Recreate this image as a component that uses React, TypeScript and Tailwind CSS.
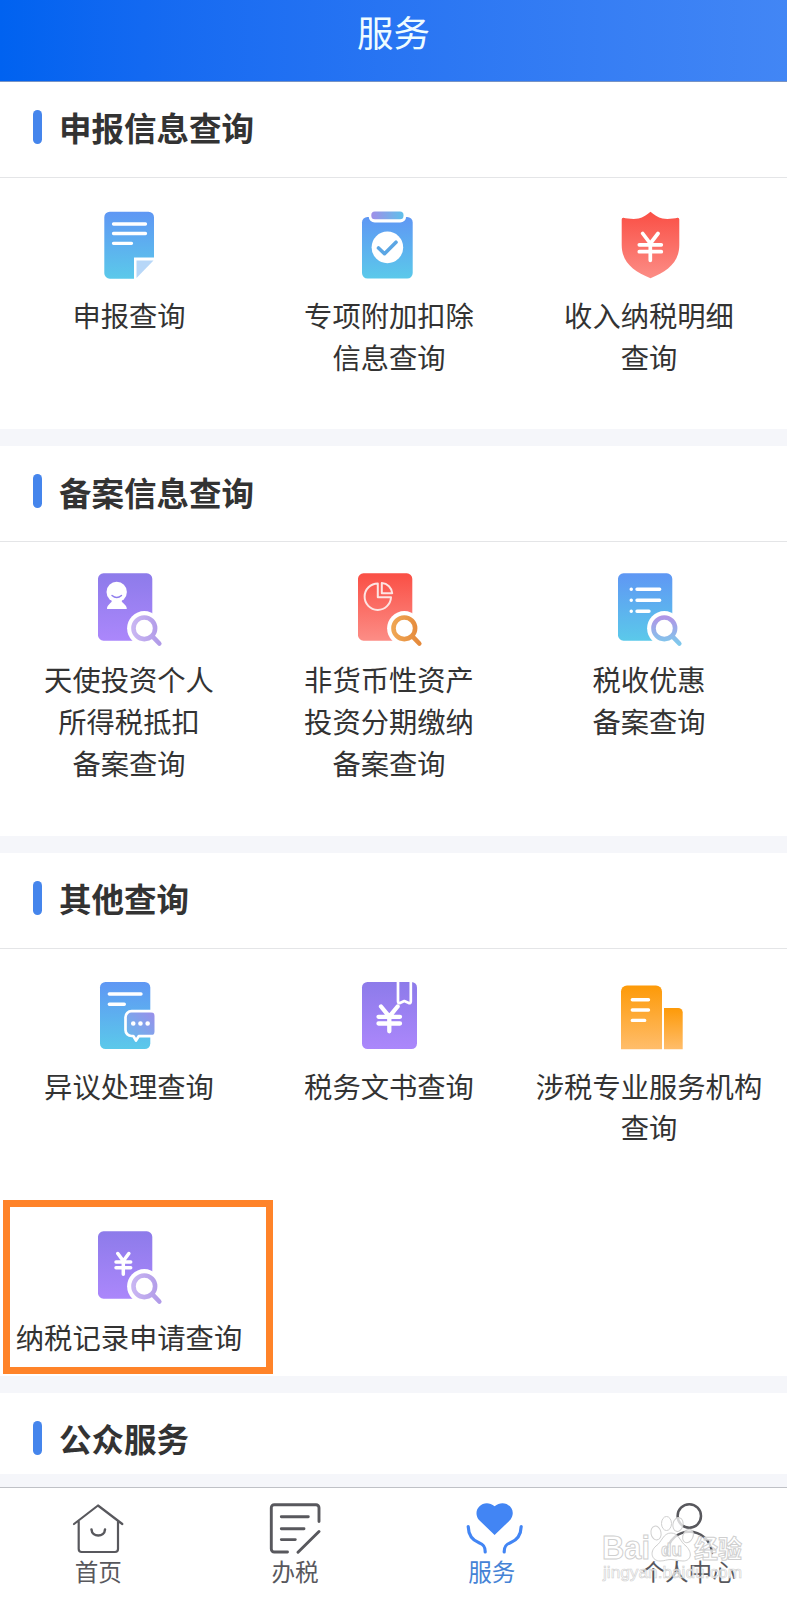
import type { ReactNode } from "react";

const BLUE = "url(#blue)";
const PURPLE = "url(#purple)";
const RED = "url(#red)";
const ORANGE = "url(#orange)";

interface ServiceItem {
  icon: ReactNode;
  lines: string[];
  highlighted?: boolean;
}

interface ServiceSection {
  title: string;
  items: ServiceItem[];
}

function Gradients() {
  return (
    <svg className="absolute h-0 w-0" aria-hidden="true">
      <defs>
        <linearGradient id="blue" x1="0" y1="0" x2="0" y2="1">
          <stop offset="0" stopColor="#5f97f4" />
          <stop offset="1" stopColor="#5bc9ea" />
        </linearGradient>
        <linearGradient id="purple" x1="0" y1="0" x2="0" y2="1">
          <stop offset="0" stopColor="#8d7bea" />
          <stop offset="1" stopColor="#ab87fb" />
        </linearGradient>
        <linearGradient id="red" x1="0" y1="0" x2="0" y2="1">
          <stop offset="0" stopColor="#fa4f45" />
          <stop offset="1" stopColor="#fc8d86" />
        </linearGradient>
        <linearGradient id="orange" x1="0" y1="0" x2="0" y2="1">
          <stop offset="0" stopColor="#fd9a08" />
          <stop offset="1" stopColor="#ffbd6b" />
        </linearGradient>
        <linearGradient id="clip" x1="0" y1="0" x2="1" y2="0">
          <stop offset="0" stopColor="#a08fe8" />
          <stop offset="1" stopColor="#5fc0ea" />
        </linearGradient>
        <linearGradient id="bubble" x1="1" y1="0" x2="0" y2="1">
          <stop offset="0" stopColor="#9a8eea" />
          <stop offset="1" stopColor="#62bcec" />
        </linearGradient>
        <linearGradient id="lensLilac" x1="0" y1="0" x2="1" y2="0">
          <stop offset="0" stopColor="#c8b5f2" />
          <stop offset="1" stopColor="#b19be8" />
        </linearGradient>
        <linearGradient id="lensOrange" x1="0" y1="0" x2="1" y2="0">
          <stop offset="0" stopColor="#efa552" />
          <stop offset="1" stopColor="#e58a3c" />
        </linearGradient>
        <linearGradient id="lensBlue" x1="0" y1="0" x2="0" y2="1">
          <stop offset="0" stopColor="#b096e6" />
          <stop offset="1" stopColor="#7fc8ec" />
        </linearGradient>
      </defs>
    </svg>
  );
}

function Icon({ children }: { children: ReactNode }) {
  return (
    <svg viewBox="0 0 84 84" className="h-[84px] w-[84px]" fill="none" strokeLinecap="round" strokeLinejoin="round">
      {children}
    </svg>
  );
}

function SearchDoc({ fill, lens, children }: { fill: string; lens: string; children: ReactNode }) {
  return (
    <Icon>
      <rect x="11" y="7.3" width="54.3" height="67.4" rx="5.5" fill={fill} />
      {children}
      <circle cx="57.3" cy="62.3" r="17.2" fill="#fff" />
      <path
        d="M57.3 51.500a10.800 10.800 0 1 0 0 21.600a10.800 10.800 0 1 0 0-21.600M65.200 70.200L72.300 77.500"
        stroke={lens}
        strokeWidth="4.600"
      />
    </Icon>
  );
}

const declareIcon = (
  <Icon>
    <path d="M22.800 9.700H61.500a5.500 5.500 0 0 1 5.500 5.500V55.600H47V76.700H22.800a5.500 5.500 0 0 1-5.500-5.500V15.200a5.500 5.500 0 0 1 5.500-5.500Z" fill={BLUE} />
    <path d="M26.500 22H58.500M26.500 31.500H58.500M26.500 41.300H44.500" stroke="#fff" strokeWidth="3.300" />
    <path d="M49.500 58.500H66.500L49.500 76Z" fill="#b7d7f8" />
  </Icon>
);

const deductionIcon = (
  <Icon>
    <rect x="15" y="15" width="50.700" height="61.500" rx="5.500" fill={BLUE} />
    <rect x="21.700" y="6.700" width="37.500" height="13.800" rx="6" fill="#fff" />
    <rect x="24.300" y="9.600" width="32.200" height="7.600" rx="3.500" fill="url(#clip)" />
    <circle cx="40.400" cy="45.400" r="15.800" fill="#fff" />
    <path d="M31.500 46L37.500 51.700L49 40.200" stroke="#5ba6e4" strokeWidth="3.600" />
  </Icon>
);

const shieldIcon = (
  <Icon>
    <path
      d="M43.500 9.700C46.500 12.500 51 15.500 55.500 16.500C60.500 17.500 67 16.500 70.500 15.800Q72.300 15.600 72.300 17.500V43C72.300 60 60.500 69.500 43.500 76.200C26.500 69.500 14.700 60 14.700 43V17.500Q14.700 15.600 16.500 15.800C20 16.500 26.500 17.500 31.500 16.500C36 15.500 40.500 12.500 43.500 9.700Z"
      fill={RED}
    />
    <path d="M35.700 31.500L43.300 41.500L51 31.500M43.300 41.500V58.300M32.300 42.800H54.300M32.300 49.700H54.300" stroke="#fff" strokeWidth="3.700" />
  </Icon>
);

const angelIcon = (
  <SearchDoc fill={PURPLE} lens="url(#lensLilac)">
    <circle cx="29.700" cy="26" r="10.200" fill="#fff" />
    <path d="M25 34H34.500C34.500 37.500 39.800 38 39.800 43H20C20 38 25 37.500 25 34Z" fill="#fff" />
    <path d="M25 29.500Q29.700 33.500 34.500 29.500" stroke="#8f7ded" strokeWidth="1.400" />
  </SearchDoc>
);

const assetIcon = (
  <SearchDoc fill={RED} lens="url(#lensOrange)">
    <path d="M30.800 17.500A13.200 13.200 0 1 0 44 31.300H30.800Z" stroke="#fde4e2" strokeWidth="2" />
    <path d="M34.800 17V27.300H45.200A11 11 0 0 0 34.800 17Z" stroke="#fde4e2" strokeWidth="2" />
  </SearchDoc>
);

const benefitIcon = (
  <SearchDoc fill={BLUE} lens="url(#lensBlue)">
    <path
      d="M24.200 23.300H24.300M30 23.300H52.700M24.200 34.300H24.300M30 34.300H52.700M24.200 45.200H24.300M30 45.200H42"
      stroke="#fff"
      strokeWidth="3.400"
    />
  </SearchDoc>
);

const objectionIcon = (
  <Icon>
    <rect x="13" y="9" width="50.300" height="67" rx="5.500" fill={BLUE} />
    <path d="M22.300 21H54M22.300 31.200H37.300" stroke="#fff" strokeWidth="3.400" />
    <path
      d="M44 39H63.500a4 4 0 0 1 4 4V58.500a4 4 0 0 1-4 4H52.500L49 68.500L45.500 62.500H44a5 5 0 0 1-5-5V44a5 5 0 0 1 5-5Z"
      fill="url(#bubble)"
    />
    <path d="M66 38.200H44.500a6 6 0 0 0-6 6V57a6 6 0 0 0 6 6H46.300L49 67.500L51.700 63.200H66" stroke="#fff" strokeWidth="2.700" />
    <path d="M46.200 50.500H46.300M53.400 50.500H53.500M60.600 50.500H60.700" stroke="#fff" strokeWidth="4.500" />
  </Icon>
);

const documentIcon = (
  <Icon>
    <rect x="15" y="9" width="55" height="67" rx="5.500" fill={PURPLE} />
    <path d="M51 9V28.500Q51 31 53.500 29.700L57.300 28L61.300 29.700Q63.800 31 63.800 28.500V9" stroke="#fff" strokeWidth="2.700" strokeLinecap="butt" />
    <path d="M34 33.500L42.300 43.700L50.600 33.500M42.300 43.700V58.300M31.500 43.800H53M31.500 50.500H53" stroke="#fff" strokeWidth="4.300" />
  </Icon>
);

const agencyIcon = (
  <Icon>
    <path d="M14 76.300V18.500a6 6 0 0 1 6-6H49a6 6 0 0 1 6 6V76.300Z" fill={ORANGE} />
    <path d="M57 76.300V35H71.200a4.500 4.500 0 0 1 4.500 4.500V76.300Z" fill={ORANGE} />
    <path d="M25.300 26.700H41.500M25.300 37H41.500M25.300 47.400H37.700" stroke="#fff" strokeWidth="3.400" />
  </Icon>
);

const taxRecordIcon = (
  <SearchDoc fill={PURPLE} lens="url(#lensLilac)">
    <path d="M30.800 29.500L36.300 37L41.800 29.500M36.300 37V50.300M29 38H43.700M29 43.700H43.700" stroke="#fff" strokeWidth="3.500" />
  </SearchDoc>
);

const sections: ServiceSection[] = [
  {
    title: "申报信息查询",
    items: [
      { icon: declareIcon, lines: ["申报查询"] },
      { icon: deductionIcon, lines: ["专项附加扣除", "信息查询"] },
      { icon: shieldIcon, lines: ["收入纳税明细", "查询"] },
    ],
  },
  {
    title: "备案信息查询",
    items: [
      { icon: angelIcon, lines: ["天使投资个人", "所得税抵扣", "备案查询"] },
      { icon: assetIcon, lines: ["非货币性资产", "投资分期缴纳", "备案查询"] },
      { icon: benefitIcon, lines: ["税收优惠", "备案查询"] },
    ],
  },
  {
    title: "其他查询",
    items: [
      { icon: objectionIcon, lines: ["异议处理查询"] },
      { icon: documentIcon, lines: ["税务文书查询"] },
      { icon: agencyIcon, lines: ["涉税专业服务机构", "查询"] },
      { icon: taxRecordIcon, lines: ["纳税记录申请查询"], highlighted: true },
    ],
  },
];

const tabs = [
  {
    label: "首页",
    active: false,
    icon: (
      <>
        <path d="M4 24L28 5.500L52.300 24M8.700 21.500V49a3 3 0 0 0 3 3H45a3 3 0 0 0 3-3V21.500" strokeWidth="2.200" />
        <path d="M21.500 29.500C22 37.500 34.500 37.500 35 29.500" />
      </>
    ),
  },
  {
    label: "办税",
    active: false,
    icon: (
      <path
        d="M52 21.500V7.700a3 3 0 0 0-3-3H7.300a3 3 0 0 0-3 3V49a3 3 0 0 0 3 3H20.500M52 31.500L31 52.300M14.300 16.700H41.300M14.300 28.700H37M14.300 39.600H28.300"
        strokeWidth="2.900"
      />
    ),
  },
  {
    label: "服务",
    active: true,
    icon: (
      <>
        <path
          d="M30.600 35L14.800 19.800C7 9 20.500-2.500 30.600 6.300C40.700-2.500 54.300 9 46.400 19.800Z"
          fill="currentColor"
          stroke="none"
        />
        <path d="M4.200 26.500C4.500 35 9 40.500 15 42.700C20 44.500 21.300 47 21.200 52M57.200 26.500C56.900 35 52.400 40.500 46.400 42.700C41.400 44.500 40.100 47 40.200 52" strokeWidth="3.200" />
      </>
    ),
  },
  {
    label: "个人中心",
    active: false,
    icon: (
      <>
        <circle cx="28.300" cy="16" r="11.700" />
        <path d="M5.800 53C8.500 24.800 48.200 24.800 51 53" />
      </>
    ),
  },
];

function SectionTitle({ title }: { title: string }) {
  return (
    <div className="flex h-24 items-center border-b border-[#e4e5e7] pl-[33px]">
      <span className="mb-[5px] h-[34px] w-[9px] rounded-full bg-[#4585ec]" />
      <h2 className="mb-1 ml-[17px] text-[32.5px] leading-none font-bold text-[#333]">{title}</h2>
    </div>
  );
}

function ServiceCell({ item }: { item: ServiceItem }) {
  return (
    <div className={`relative flex flex-col items-center pt-6 ${item.highlighted ? "pb-[18px]" : "pb-[52px]"}`}>
      {item.icon}
      <div className="mt-2 text-center text-[28.3px] leading-[41.7px] whitespace-nowrap text-[#333]">
        {item.lines.map((line) => (
          <p key={line}>{line}</p>
        ))}
      </div>
      {item.highlighted ? (
        <div className="absolute top-0 left-1 h-[174px] w-[270px] border-[7px] border-[#ff8329]" />
      ) : null}
    </div>
  );
}

function Watermark() {
  return (
    <svg
      viewBox="0 0 150 64"
      className="absolute right-[38px] bottom-[14px] h-16 w-[150px] overflow-visible font-['Liberation_Sans','Noto_Sans_CJK_SC',sans-serif]"
      fill="#fff"
      fillOpacity="0.75"
      stroke="#cfcfcf"
      strokeWidth="1"
    >
      <text x="3" y="37" fontSize="33" fontWeight="bold" textLength="48" lengthAdjust="spacingAndGlyphs">Bai</text>
      <ellipse cx="57" cy="11" rx="5" ry="7" transform="rotate(-12 57 11)" />
      <ellipse cx="67.500" cy="1.500" rx="5" ry="7" />
      <ellipse cx="79" cy="2.500" rx="5" ry="7" transform="rotate(12 79 2.500)" />
      <ellipse cx="89" cy="14" rx="5" ry="7" transform="rotate(25 89 14)" />
      <path d="M72 11C64 11 63 20 57 24C50 30 53 39 61 39C66 39 67 37.500 72 37.500S79 39 84 39C92 39 94 31 87 24C81 20 80 11 72 11Z" />
      <text x="62" y="34" fontSize="19" fontWeight="bold" textLength="21" lengthAdjust="spacingAndGlyphs">du</text>
      <text x="95" y="36" fontSize="25" fontWeight="bold" textLength="48" lengthAdjust="spacingAndGlyphs">经验</text>
      <text x="4" y="56" fontSize="17" strokeWidth="0.600" textLength="139" lengthAdjust="spacingAndGlyphs">jingyan.baidu.com</text>
    </svg>
  );
}

function TabBar() {
  return (
    <nav className="relative grid h-[113px] shrink-0 grid-cols-4 border-t border-[#bfc1c6] bg-white">
      {tabs.map((tab) => (
        <button
          key={tab.label}
          type="button"
          className={`flex flex-col items-center pt-3 ${tab.active ? "text-[#4285f4]" : "text-[#58585d]"}`}
        >
          <svg
            viewBox="0 0 56 56"
            className="h-14 w-14 overflow-visible"
            fill="none"
            stroke="currentColor"
            strokeWidth="2.500"
            strokeLinecap="round"
            strokeLinejoin="round"
          >
            {tab.icon}
          </svg>
          <span className={`mt-px text-[23.6px] leading-7 ${tab.active ? "text-[#4583d6]" : ""}`}>{tab.label}</span>
        </button>
      ))}
      <Watermark />
    </nav>
  );
}

export default function App() {
  return (
    <div className="flex h-[1600px] w-[787px] flex-col overflow-hidden bg-white font-['Noto_Sans_CJK_SC',sans-serif]">
      <Gradients />
      <header className="flex h-[82px] shrink-0 items-center justify-center border-b border-[#7793c4] bg-linear-to-r from-[#0062f0] to-[#4286f5] pb-4">
        <h1 className="text-[36.5px] leading-none text-[#effcff]">服务</h1>
      </header>

      <main className="min-h-0 flex-1 overflow-hidden bg-[#f5f6fa]">
        {sections.map((section) => (
          <section key={section.title} className="mb-[17px] bg-white">
            <SectionTitle title={section.title} />
            <div className="-ml-px grid w-[780px] grid-cols-3">
              {section.items.map((item) => (
                <ServiceCell key={item.lines[0]} item={item} />
              ))}
            </div>
          </section>
        ))}
        <section className="h-[81px] overflow-hidden bg-white">
          <SectionTitle title="公众服务" />
        </section>
      </main>

      <TabBar />
    </div>
  );
}
